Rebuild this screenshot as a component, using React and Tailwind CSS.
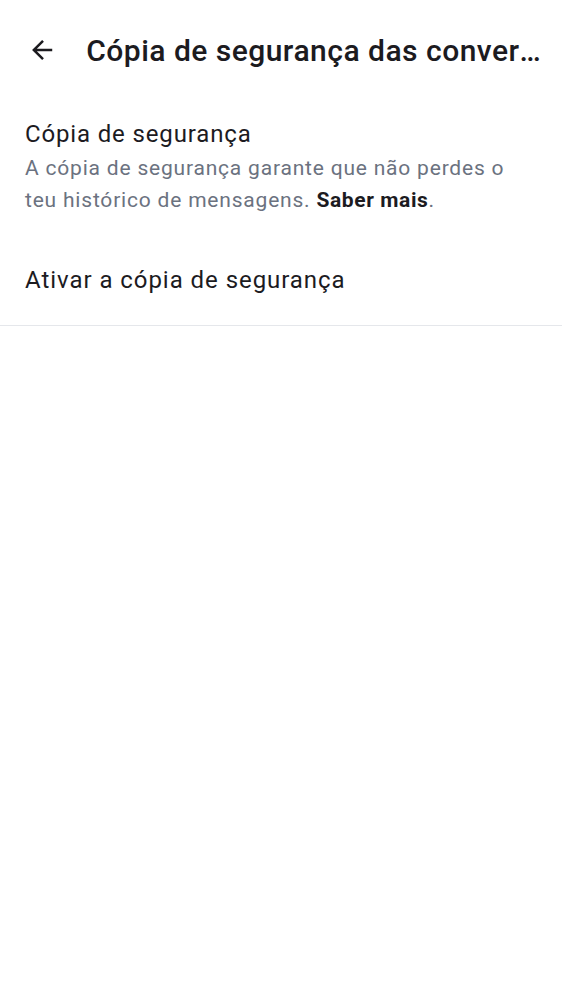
const ArrowBack = () => (
  <svg width="32" height="32" viewBox="0 0 24 24" fill="currentColor">
    <path d="M20 11H7.83l5.59-5.59L12 4l-8 8 8 8 1.41-1.41L7.83 13H20v-2z" />
  </svg>
);

export default function App() {
  return (
    <div className="min-h-screen bg-white text-[#1c1b1f] font-['Roboto','Noto_Sans',sans-serif]">
      {/* Top bar */}
      <div className="flex items-center h-[100px] pl-[27px] pr-[20px]">
        <ArrowBack />
        <h1 className="ml-[29px] font-['Roboto_Medium','Roboto',sans-serif] text-[30px] font-medium tracking-[0.015em] truncate">
          Cópia de segurança das conversas
        </h1>
      </div>

      {/* Backup info */}
      <div className="px-[25px] pt-[18px]">
        <p className="text-[24px] leading-[32px] tracking-[0.85px]">Cópia de segurança</p>
        <p className="mt-[2px] text-[21px] leading-[32px] text-[#6b7280] pr-[20px] tracking-[0.8px]">
          A cópia de segurança garante que não perdes o teu histórico de mensagens.{' '}
          <span className="font-bold text-[#1c1b1f] tracking-[0.6px]">Saber mais</span>.
        </p>
      </div>

      {/* Enable backup */}
      <div className="px-[25px] pt-[48px] pb-[29px] border-b border-[#e5e7eb]">
        <p className="text-[24px] leading-[32px] tracking-[0.95px]">Ativar a cópia de segurança</p>
      </div>
    </div>
  );
}
